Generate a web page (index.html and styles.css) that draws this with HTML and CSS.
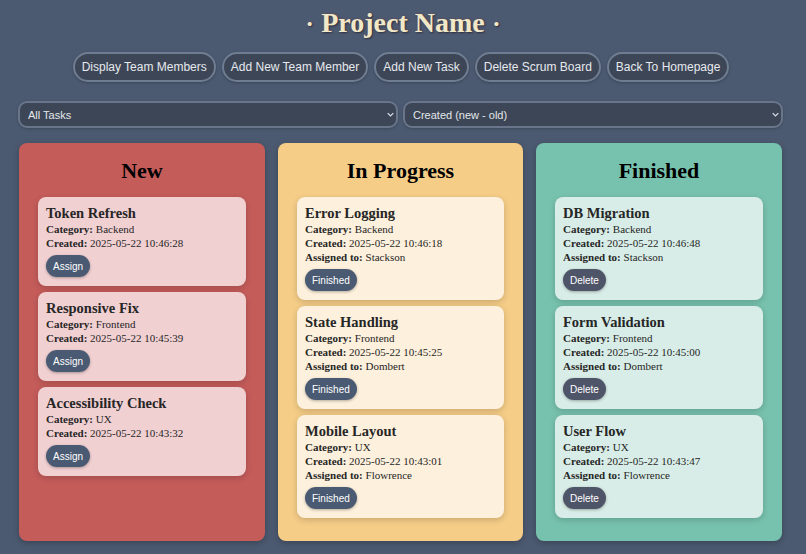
FILE: index.html
```html
<!DOCTYPE html>
<html lang="en">
<head>
<meta charset="utf-8">
<title>Project Name</title>
<link rel="stylesheet" href="styles.css">
</head>
<body>
<header class="top">
  <h1 class="title"><span class="dot">•</span> Project Name <span class="dot">•</span></h1>
  <nav class="actions">
    <button class="action">Display Team Members</button>
    <button class="action">Add New Team Member</button>
    <button class="action">Add New Task</button>
    <button class="action">Delete Scrum Board</button>
    <button class="action">Back To Homepage</button>
  </nav>
  <div class="filters">
    <div class="select-wrap">
      <select class="select"><option>All Tasks</option></select>
      <svg class="chev" viewBox="0 0 10 6" width="7" height="5"><path d="M1 1l4 4 4-4" fill="none" stroke="#d8dde5" stroke-width="1.8"/></svg>
    </div>
    <div class="select-wrap">
      <select class="select"><option>Created (new - old)</option></select>
      <svg class="chev" viewBox="0 0 10 6" width="7" height="5"><path d="M1 1l4 4 4-4" fill="none" stroke="#d8dde5" stroke-width="1.8"/></svg>
    </div>
  </div>
</header>
<main class="board">
  <section class="col col-new">
    <h2 class="col-title">New</h2>
    <div class="cards">
      <article class="card">
        <h3 class="card-title">Token Refresh</h3>
        <p class="line"><b>Category:</b> Backend</p>
        <p class="line"><b>Created:</b> 2025-05-22 10:46:28</p>
        <button class="pill">Assign</button>
      </article>
      <article class="card">
        <h3 class="card-title">Responsive Fix</h3>
        <p class="line"><b>Category:</b> Frontend</p>
        <p class="line"><b>Created:</b> 2025-05-22 10:45:39</p>
        <button class="pill">Assign</button>
      </article>
      <article class="card">
        <h3 class="card-title">Accessibility Check</h3>
        <p class="line"><b>Category:</b> UX</p>
        <p class="line"><b>Created:</b> 2025-05-22 10:43:32</p>
        <button class="pill">Assign</button>
      </article>
    </div>
  </section>
  <section class="col col-prog">
    <h2 class="col-title">In Progress</h2>
    <div class="cards">
      <article class="card">
        <h3 class="card-title">Error Logging</h3>
        <p class="line"><b>Category:</b> Backend</p>
        <p class="line"><b>Created:</b> 2025-05-22 10:46:18</p>
        <p class="line"><b>Assigned to:</b> Stackson</p>
        <button class="pill">Finished</button>
      </article>
      <article class="card">
        <h3 class="card-title">State Handling</h3>
        <p class="line"><b>Category:</b> Frontend</p>
        <p class="line"><b>Created:</b> 2025-05-22 10:45:25</p>
        <p class="line"><b>Assigned to:</b> Dombert</p>
        <button class="pill">Finished</button>
      </article>
      <article class="card">
        <h3 class="card-title">Mobile Layout</h3>
        <p class="line"><b>Category:</b> UX</p>
        <p class="line"><b>Created:</b> 2025-05-22 10:43:01</p>
        <p class="line"><b>Assigned to:</b> Flowrence</p>
        <button class="pill">Finished</button>
      </article>
    </div>
  </section>
  <section class="col col-done">
    <h2 class="col-title">Finished</h2>
    <div class="cards">
      <article class="card">
        <h3 class="card-title">DB Migration</h3>
        <p class="line"><b>Category:</b> Backend</p>
        <p class="line"><b>Created:</b> 2025-05-22 10:46:48</p>
        <p class="line"><b>Assigned to:</b> Stackson</p>
        <button class="pill pill-del">Delete</button>
      </article>
      <article class="card">
        <h3 class="card-title">Form Validation</h3>
        <p class="line"><b>Category:</b> Frontend</p>
        <p class="line"><b>Created:</b> 2025-05-22 10:45:00</p>
        <p class="line"><b>Assigned to:</b> Dombert</p>
        <button class="pill pill-del">Delete</button>
      </article>
      <article class="card">
        <h3 class="card-title">User Flow</h3>
        <p class="line"><b>Category:</b> UX</p>
        <p class="line"><b>Created:</b> 2025-05-22 10:43:47</p>
        <p class="line"><b>Assigned to:</b> Flowrence</p>
        <button class="pill pill-del">Delete</button>
      </article>
    </div>
  </section>
</main>
</body>
</html>
```

FILE: styles.css
```css
* { box-sizing: border-box; }
html, body { height: 100%; }
body {
  margin: 0;
  background: #4c5a71;
  font-family: "Liberation Serif", "Times New Roman", serif;
  display: flex;
  flex-direction: column;
  overflow: hidden;
}
.top {
  display: flex;
  flex-direction: column;
  align-items: center;
}
.title {
  margin: 5px 0 0;
  height: 36px;
  line-height: 36px;
  font-size: 28px;
  font-weight: bold;
  color: #f1e8c8;
  text-shadow: 1px 1px 2px #2a3140, 0 0 2px rgba(150,60,60,0.5);
}
.dot {
  font-size: 15px;
  vertical-align: 3px;
  margin: 0 2px;
}
.actions {
  display: flex;
  gap: 6px;
  margin-top: 11px;
  padding-right: 4px;
}
.action {
  height: 30px;
  padding: 0 7px;
  border: 2px solid #6f7d92;
  border-radius: 15px;
  background: #3d4656;
  color: #e6e9ee;
  font-family: "Liberation Sans", Arial, sans-serif;
  font-size: 12px;
  box-shadow: 0 1px 3px rgba(0,0,0,0.25);
}
.filters {
  align-self: stretch;
  display: grid;
  grid-template-columns: 1fr 1fr;
  gap: 5px;
  margin-top: 19px;
  padding: 0 23px 0 18px;
}
.select-wrap { position: relative; }
.select {
  width: 100%;
  height: 27px;
  appearance: none;
  -webkit-appearance: none;
  background: #3d4656;
  color: #e3e6ea;
  border: 2px solid #68758a;
  border-radius: 9px;
  padding: 0 8px;
  font-family: "Liberation Sans", Arial, sans-serif;
  font-size: 11px;
  box-shadow: 0 1px 3px rgba(0,0,0,0.2);
}
.chev {
  position: absolute;
  right: 4px;
  top: 11px;
}
.board {
  flex: 1;
  display: grid;
  grid-template-columns: 246px 245px 246px;
  gap: 13px;
  padding: 15px 23px 13px 19px;
  min-height: 0;
}
.col {
  border-radius: 8px;
  padding: 12px 19px;
  box-shadow: 0 2px 6px rgba(0,0,0,0.25);
}
.col-new { background: #c45c5a; }
.col-prog { background: #f5cd87; }
.col-done { background: #77c2ae; }
.col-new .card { background: #f1d0d2; }
.col-prog .card { background: #fdf0dc; }
.col-done .card { background: #d8ede7; }
.col-title {
  margin: 0 0 12px;
  height: 30px;
  line-height: 31px;
  text-align: center;
  font-size: 22px;
  font-weight: bold;
  color: #000;
}
.cards {
  display: flex;
  flex-direction: column;
  gap: 6px;
}
.card {
  border-radius: 8px;
  padding: 8px 8px 9px;
  color: #262626;
  box-shadow: 0 2px 6px rgba(0,0,0,0.18);
}
.card-title {
  margin: 0;
  font-size: 14.5px;
  line-height: 17px;
  font-weight: bold;
}
.line {
  margin: 0;
  font-size: 11px;
  line-height: 14px;
}
.pill {
  display: block;
  margin-top: 5px;
  height: 22px;
  padding: 0 7px;
  border: none;
  border-radius: 11px;
  background: #4a5a72;
  color: #fff;
  font-family: "Liberation Sans", Arial, sans-serif;
  font-size: 10px;
  box-shadow: 0 1px 3px rgba(0,0,0,0.3);
}
.pill-del { background: #4f5568; }
```
